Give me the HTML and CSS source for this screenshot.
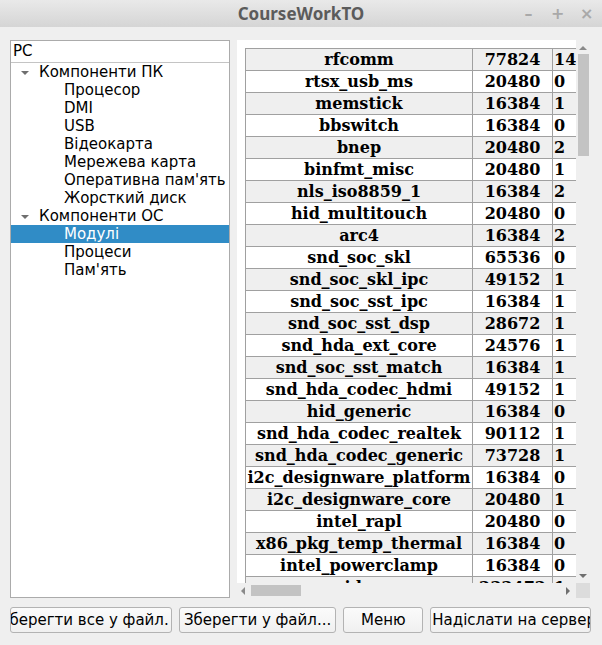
FILE: index.html
```html
<!DOCTYPE html>
<html>
<head>
<meta charset="utf-8">
<link rel="stylesheet" href="styles.css">
</head>
<body>
<div class="window">
  <div class="titlebar">
    <span class="title">CourseWorkTO</span>
    <div class="controls">
      <span class="ctl">&#8211;</span>
      <span class="ctl">+</span>
      <span class="ctl x">&#215;</span>
    </div>
  </div>
  <div class="main">
    <div class="tree">
      <div class="tree-header">PC</div>
      <div class="row top"><span class="arrow"></span>Компоненти ПК</div>
      <div class="row child">Процесор</div>
      <div class="row child">DMI</div>
      <div class="row child">USB</div>
      <div class="row child">Відеокарта</div>
      <div class="row child">Мережева карта</div>
      <div class="row child">Оперативна пам'ять</div>
      <div class="row child">Жорсткий диск</div>
      <div class="row top"><span class="arrow"></span>Компоненти ОС</div>
      <div class="row child selected">Модулі</div>
      <div class="row child">Процеси</div>
      <div class="row child">Пам'ять</div>
    </div>
    <div class="scrollarea">
      <div class="viewport">
        <table class="grid">
          <colgroup><col class="c1"><col class="c2"><col class="c3"></colgroup>
          <tbody>
            <tr><td>rfcomm</td><td>77824</td><td>14</td></tr>
            <tr><td>rtsx_usb_ms</td><td>20480</td><td>0</td></tr>
            <tr><td>memstick</td><td>16384</td><td>1</td></tr>
            <tr><td>bbswitch</td><td>16384</td><td>0</td></tr>
            <tr><td>bnep</td><td>20480</td><td>2</td></tr>
            <tr><td>binfmt_misc</td><td>20480</td><td>1</td></tr>
            <tr><td>nls_iso8859_1</td><td>16384</td><td>2</td></tr>
            <tr><td>hid_multitouch</td><td>20480</td><td>0</td></tr>
            <tr><td>arc4</td><td>16384</td><td>2</td></tr>
            <tr><td>snd_soc_skl</td><td>65536</td><td>0</td></tr>
            <tr><td>snd_soc_skl_ipc</td><td>49152</td><td>1</td></tr>
            <tr><td>snd_soc_sst_ipc</td><td>16384</td><td>1</td></tr>
            <tr><td>snd_soc_sst_dsp</td><td>28672</td><td>1</td></tr>
            <tr><td>snd_hda_ext_core</td><td>24576</td><td>1</td></tr>
            <tr><td>snd_soc_sst_match</td><td>16384</td><td>1</td></tr>
            <tr><td>snd_hda_codec_hdmi</td><td>49152</td><td>1</td></tr>
            <tr><td>hid_generic</td><td>16384</td><td>0</td></tr>
            <tr><td>snd_hda_codec_realtek</td><td>90112</td><td>1</td></tr>
            <tr><td>snd_hda_codec_generic</td><td>73728</td><td>1</td></tr>
            <tr><td>i2c_designware_platform</td><td>16384</td><td>0</td></tr>
            <tr><td>i2c_designware_core</td><td>20480</td><td>1</td></tr>
            <tr><td>intel_rapl</td><td>20480</td><td>0</td></tr>
            <tr><td>x86_pkg_temp_thermal</td><td>16384</td><td>0</td></tr>
            <tr><td>intel_powerclamp</td><td>16384</td><td>0</td></tr>
            <tr><td>video</td><td>233472</td><td>1</td></tr>
          </tbody>
        </table>
      </div>
      <div class="vscroll">
        <span class="tri up"></span>
        <div class="vthumb"></div>
        <div class="vfill"></div>
        <span class="tri down"></span>
      </div>
      <div class="hscroll">
        <span class="tri left"></span>
        <div class="hthumb"></div>
        <div class="hfill"></div>
        <span class="tri right"></span>
      </div>
      <div class="corner"></div>
    </div>
  </div>
  <div class="buttons">
    <button class="btn b1"><span>Зберегти все у файл.</span></button>
    <button class="btn b2"><span>Зберегти у файл...</span></button>
    <button class="btn b3"><span>Меню</span></button>
    <button class="btn b4"><span>Надіслати на сервер</span></button>
  </div>
</div>
</body>
</html>
```

FILE: styles.css
```css
html, body {
  margin: 0;
  padding: 0;
  background: #efefef;
}
.window {
  width: 602px;
  height: 645px;
  display: flex;
  flex-direction: column;
  font-family: "DejaVu Sans", sans-serif;
  font-size: 15px;
  color: #000;
}
.titlebar {
  height: 27px;
  background: linear-gradient(#e9e9e9, #d5d5d5);
  display: flex;
  align-items: center;
  justify-content: center;
  position: relative;
  flex: none;
}
.title {
  font-family: "Noto Sans", "Open Sans", sans-serif;
  font-weight: bold;
  font-size: 17px;
  color: #5b5b5b;
}
.controls {
  position: absolute;
  right: 9px;
  top: 0;
  height: 27px;
  display: flex;
  align-items: center;
  gap: 16px;
  font-family: "DejaVu Sans", sans-serif;
  font-weight: bold;
  font-size: 16px;
  color: #a9a9a9;
}
.ctl { width: 13px; text-align: center; }
.main {
  flex: none;
  height: 558px;
  margin-top: 13px;
  padding: 0 12px 0 10px;
  display: flex;
  gap: 7px;
}
.tree {
  width: 218px;
  border: 1px solid #ababab;
  background: #fff;
  flex: none;
  overflow: hidden;
}
.tree-header {
  height: 21px;
  border-bottom: 1px solid #c4c4c4;
  padding-left: 2px;
  line-height: 21px;
}
.row {
  height: 18px;
  line-height: 18px;
  white-space: nowrap;
  display: flex;
  align-items: center;
}
.row.top { padding-left: 10px; }
.row.child { padding-left: 53px; }
.row.selected { background: #308cc6; color: #fff; }
.arrow {
  width: 0;
  height: 0;
  border-left: 4px solid transparent;
  border-right: 4px solid transparent;
  border-top: 4px solid #6f6f6f;
  margin-right: 10px;
  margin-top: 1px;
}
.scrollarea {
  flex: 1;
  display: grid;
  grid-template-columns: 1fr 14px;
  grid-template-rows: 1fr 15px;
}
.viewport {
  background: #fff;
  overflow: hidden;
  padding: 8px 0 0 8px;
}
.grid {
  border-collapse: collapse;
  table-layout: fixed;
  width: 348px;
  font-family: "DejaVu Serif", serif;
  font-weight: bold;
  font-size: 16px;
}
.c1 { width: 227px; }
.c2 { width: 80px; }
.c3 { width: 41px; }
.grid td {
  height: 21px;
  padding: 0;
  border: 1px solid #a0a0a0;
  text-align: center;
  white-space: nowrap;
  overflow: hidden;
  line-height: 21px;
}
.grid td:nth-child(3) { text-align: left; padding-left: 1px; }
.grid tr:nth-child(odd) td { background: #efefef; }
.grid tr:nth-child(even) td { background: #fff; }
.vscroll {
  display: flex;
  flex-direction: column;
  align-items: center;
  padding-top: 6px;
}
.vthumb {
  width: 11px;
  height: 102px;
  background: #c3c3c3;
  margin-top: 4px;
}
.vfill { flex: 1; }
.tri {
  width: 0;
  height: 0;
  display: block;
  flex: none;
}
.tri.up {
  border-left: 4px solid transparent;
  border-right: 4px solid transparent;
  border-bottom: 4px solid #8a8a8a;
}
.tri.down {
  border-left: 4px solid transparent;
  border-right: 4px solid transparent;
  border-top: 4px solid #6f6f6f;
  margin-bottom: 5px;
}
.hscroll {
  display: flex;
  align-items: center;
  padding-left: 4px;
}
.hthumb {
  width: 50px;
  height: 11px;
  background: #c3c3c3;
  margin-left: 6px;
}
.hfill { flex: 1; }
.tri.left {
  border-top: 4px solid transparent;
  border-bottom: 4px solid transparent;
  border-right: 4px solid #8a8a8a;
}
.tri.right {
  border-top: 4px solid transparent;
  border-bottom: 4px solid transparent;
  border-left: 4px solid #6f6f6f;
  margin-right: 6px;
}
.corner {
  background: #dcdcdc;
}
.buttons {
  display: flex;
  gap: 7px;
  padding: 9px 11px 0 10px;
}
.btn {
  height: 26px;
  border: 1px solid #b3b3b3;
  border-radius: 3px;
  background: linear-gradient(#fbfbfb, #f0f0f0);
  font-family: "DejaVu Sans", sans-serif;
  font-size: 15px;
  color: #000;
  padding: 0;
  overflow: hidden;
  display: flex;
  align-items: center;
  white-space: nowrap;
}
.b1 { width: 162px; justify-content: flex-end; padding-right: 2px; }
.b2 { width: 158px; justify-content: center; }
.b3 { width: 80px; justify-content: center; }
.b4 { width: 161px; justify-content: flex-start; padding-left: 1px; }
```
